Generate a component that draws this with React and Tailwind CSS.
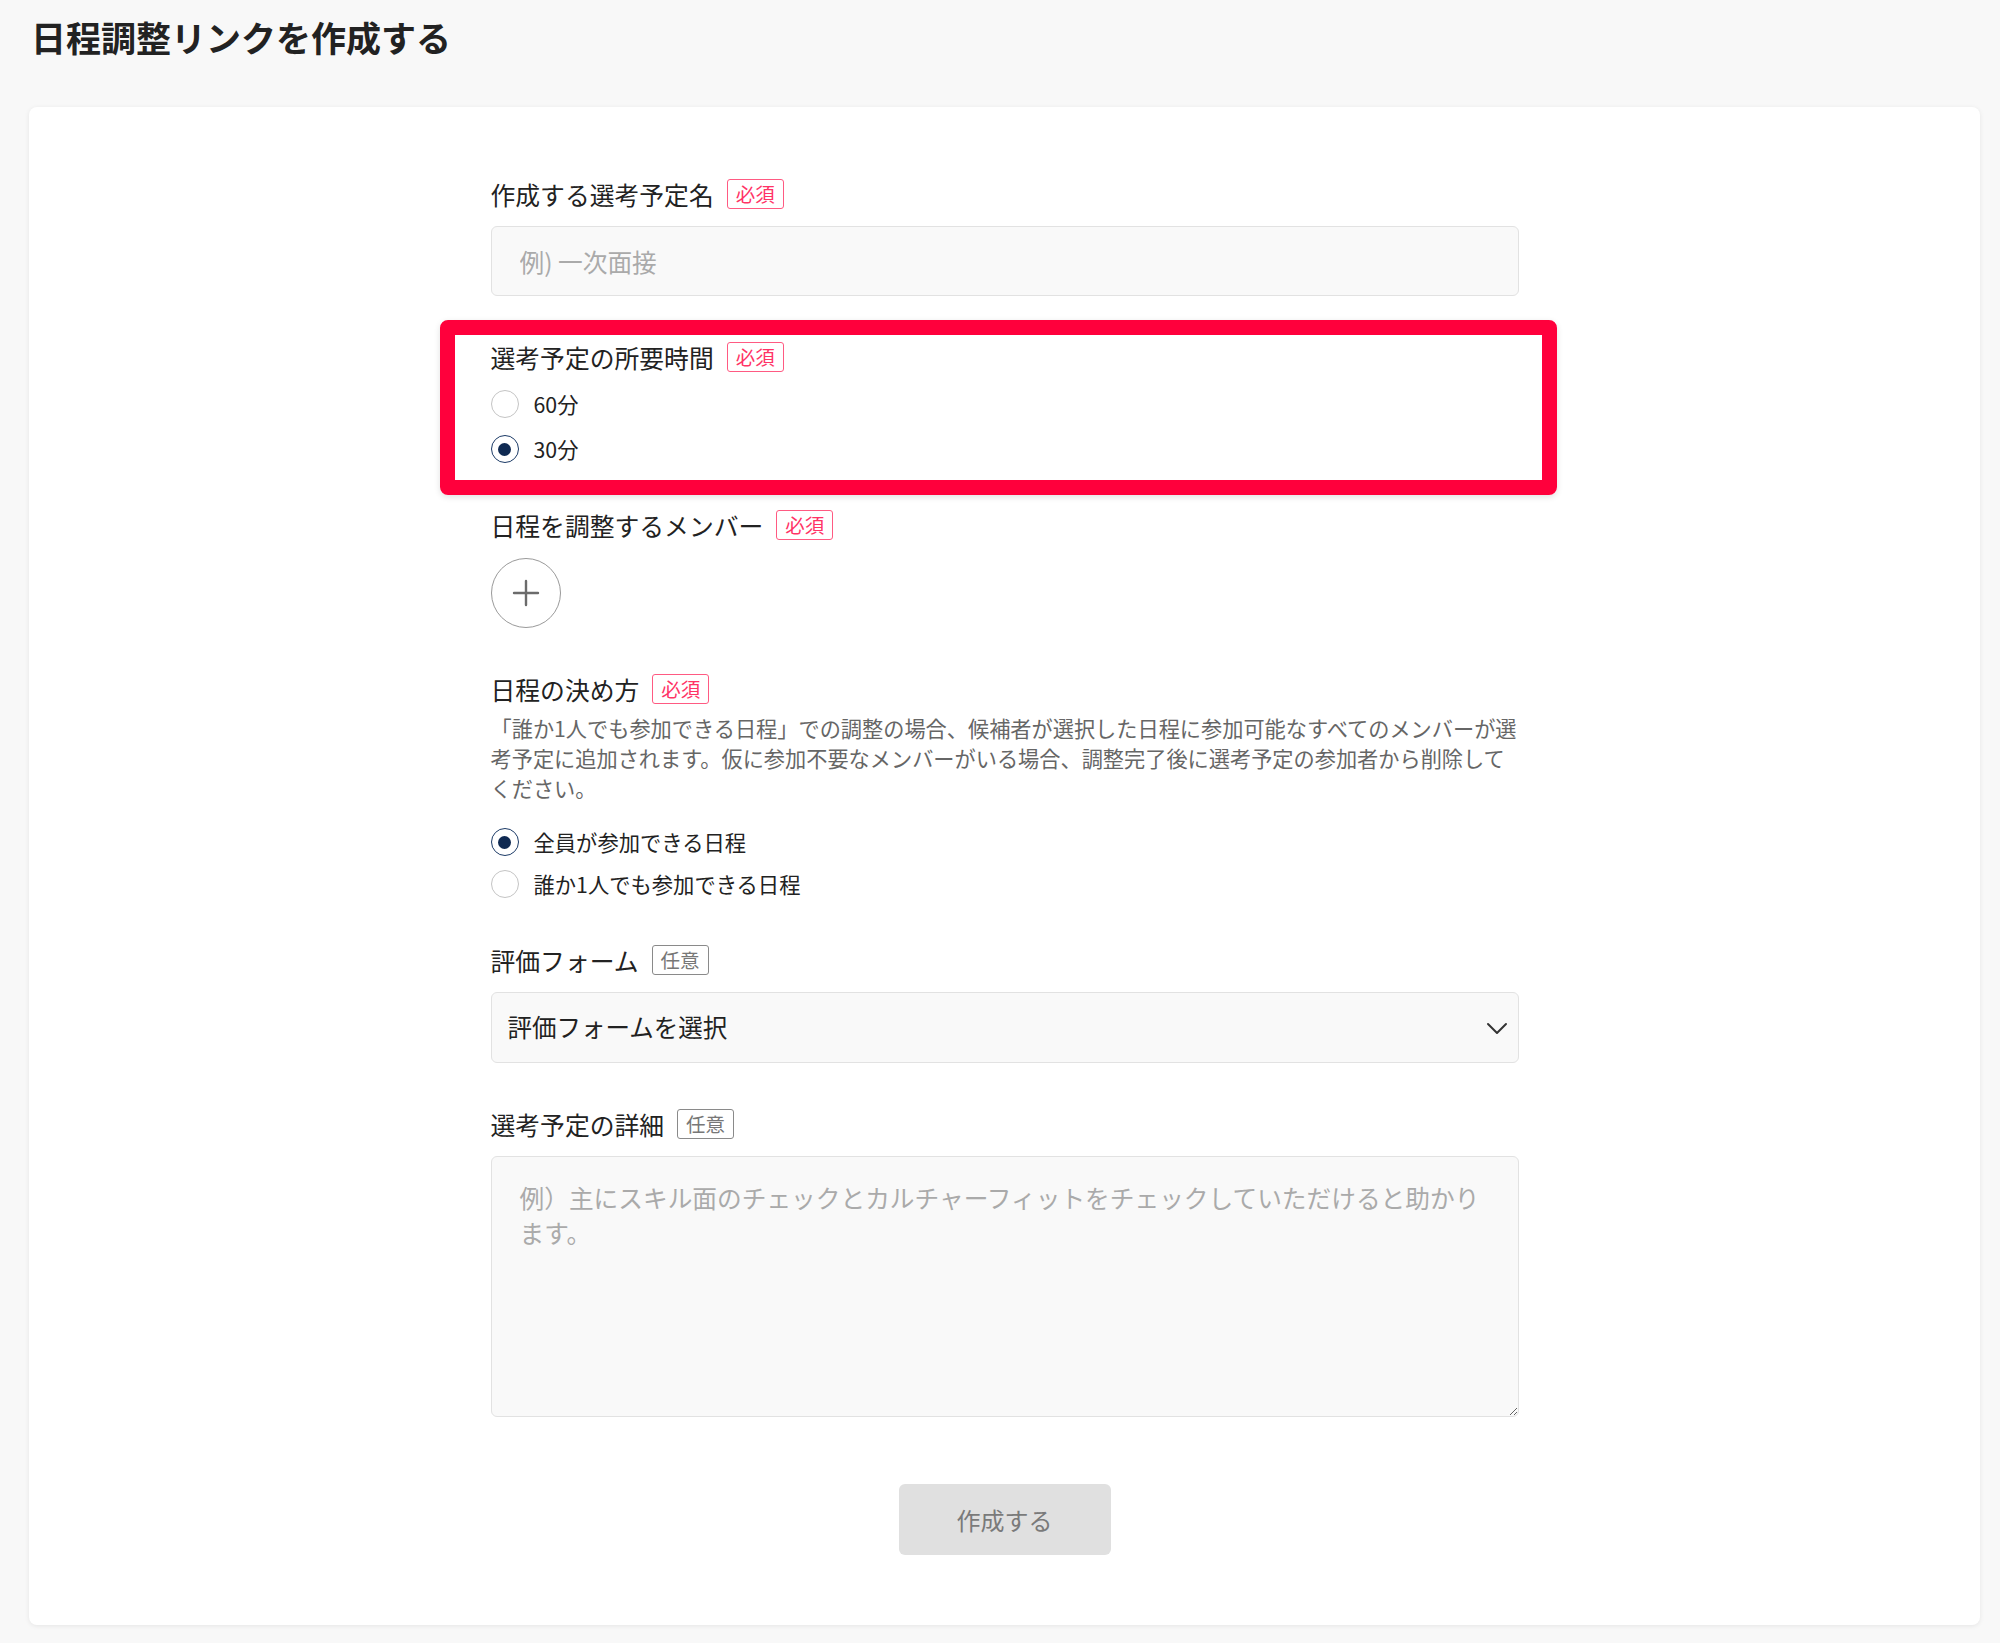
import React from 'react';

const Badge = ({ required }) =>
  required ? (
    <span className="inline-flex items-center h-[30px] px-[8px] border-[1.5px] border-[#ff5a82] rounded-[3px] text-[19.5px] leading-none text-[#ff3366]">
      必須
    </span>
  ) : (
    <span className="inline-flex items-center h-[30px] px-[8px] border-[1.5px] border-[#8a8a8a] rounded-[3px] text-[19.5px] leading-none text-[#777]">
      任意
    </span>
  );

const FieldLabel = ({ children, required }) => (
  <div className="flex items-center gap-[13px] h-[30px]">
    <span className="text-[24.8px] leading-none text-[#222]">{children}</span>
    <Badge required={required} />
  </div>
);

const Radio = ({ label, checked }) => (
  <label className="flex items-center gap-[15px] h-[30px] cursor-pointer">
    {checked ? (
      <span className="flex items-center justify-center w-[28px] h-[28px] rounded-full border-[1.5px] border-[#1b3a66] bg-white">
        <span className="w-[13px] h-[13px] rounded-full bg-[#0f2a52]" />
      </span>
    ) : (
      <span className="w-[28px] h-[28px] rounded-full border-[1.5px] border-[#c4c4c4] bg-white" />
    )}
    <span className="text-[21.3px] leading-none text-[#222]">{label}</span>
  </label>
);

export default function App() {
  return (
    <div className="min-h-[1643px] bg-[#f8f8f8] pt-[16px] pb-[19px] font-['Noto_Sans_CJK_JP','Noto_Sans',sans-serif]">
      <h1 className="ml-[31px] text-[35px] leading-[42px] font-bold text-[#222]">日程調整リンクを作成する</h1>

      <div className="mt-[49px] ml-[29px] mr-[20px] bg-white rounded-[8px] shadow-[0_1px_5px_rgba(0,0,0,0.08)] pt-[72px] pb-[70px]">
        <div className="w-[1028px] mx-auto">
          <div className="flex flex-col gap-[46px]">
            {/* 選考予定名 */}
            <div>
              <FieldLabel required>作成する選考予定名</FieldLabel>
              <input
                type="text"
                placeholder="例) 一次面接"
                className="mt-[17px] w-full h-[70px] px-[28px] bg-[#f9f9f9] border border-[#e2e2e2] rounded-[6px] text-[24.7px] text-[#222] placeholder:text-[#aaa] outline-none"
              />
            </div>

            {/* 所要時間 (highlighted) */}
            <div className="relative">
              <FieldLabel required>選考予定の所要時間</FieldLabel>
              <div className="mt-[17px] flex flex-col gap-[15px]">
                <Radio label="60分" />
                <Radio label="30分" checked />
              </div>
              <div className="pointer-events-none absolute -left-[51px] -right-[38px] -top-[22px] -bottom-[31px] border-[15px] border-[#ff003c] rounded-[8px] shadow-[0_2px_6px_rgba(0,0,0,0.12)]" />
            </div>

            {/* メンバー */}
            <div>
              <FieldLabel required>日程を調整するメンバー</FieldLabel>
              <button className="mt-[18px] flex items-center justify-center w-[70px] h-[70px] rounded-full border-[1.5px] border-[#9a9a9a] bg-white">
                <svg width="28" height="28" viewBox="0 0 28 28" fill="none" stroke="#6b6b6b" strokeWidth="2.4" strokeLinecap="round">
                  <line x1="14" y1="2" x2="14" y2="26" />
                  <line x1="2" y1="14" x2="26" y2="14" />
                </svg>
              </button>
            </div>

            {/* 決め方 */}
            <div>
              <FieldLabel required>日程の決め方</FieldLabel>
              <p className="mt-[9px] text-[21.2px] leading-[30px] text-[#666] whitespace-nowrap">
                「誰か1人でも参加できる日程」での調整の場合、候補者が選択した日程に参加可能なすべてのメンバーが選
                <br />
                考予定に追加されます。仮に参加不要なメンバーがいる場合、調整完了後に選考予定の参加者から削除して
                <br />
                ください。
              </p>
              <div className="mt-[24px] flex flex-col gap-[12px]">
                <Radio label="全員が参加できる日程" checked />
                <Radio label="誰か1人でも参加できる日程" />
              </div>
            </div>

            {/* 評価フォーム */}
            <div>
              <FieldLabel>評価フォーム</FieldLabel>
              <div className="mt-[17px] flex items-center justify-between h-[71px] pl-[16px] pr-[10px] bg-[#f9f9f9] border border-[#e2e2e2] rounded-[6px]">
                <span className="text-[24.5px] text-[#222]">評価フォームを選択</span>
                <svg width="22" height="14" viewBox="0 0 22 14" fill="none" stroke="#333" strokeWidth="2" strokeLinecap="round" strokeLinejoin="round">
                  <polyline points="2,3 11,12 20,3" />
                </svg>
              </div>
            </div>

            {/* 詳細 */}
            <div>
              <FieldLabel>選考予定の詳細</FieldLabel>
              <textarea
                placeholder="例）主にスキル面のチェックとカルチャーフィットをチェックしていただけると助かります。"
                className="mt-[17px] block w-full h-[261px] px-[28px] pt-[23px] bg-[#f9f9f9] border border-[#e2e2e2] rounded-[6px] text-[24.7px] leading-[35px] text-[#222] placeholder:text-[#aaa] outline-none"
              />
            </div>
          </div>

          <div className="mt-[67px] flex justify-center">
            <button className="w-[212px] h-[71px] bg-[#e0e0e0] rounded-[6px] text-[24px] text-[#7a7a7a]">作成する</button>
          </div>
        </div>
      </div>
    </div>
  );
}
